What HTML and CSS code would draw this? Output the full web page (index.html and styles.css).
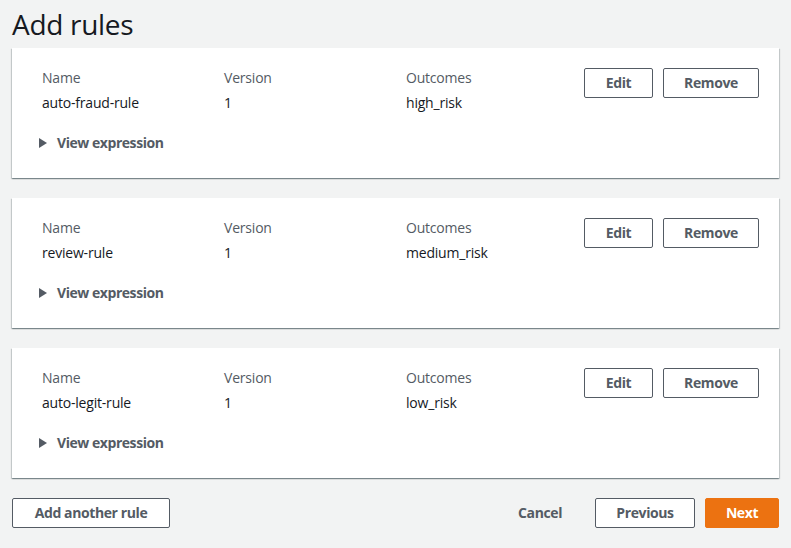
FILE: index.html
```html
<!DOCTYPE html>
<html>
<head>
<meta charset="utf-8">
<link rel="stylesheet" href="styles.css">
</head>
<body>
<div class="page">
  <h1 class="title">Add rules</h1>
  <div class="cards">
    <div class="card">
      <div class="grid">
        <div class="col"><div class="label">Name</div><div class="value">auto-fraud-rule</div></div>
        <div class="col"><div class="label">Version</div><div class="value">1</div></div>
        <div class="col"><div class="label">Outcomes</div><div class="value">high_risk</div></div>
        <div class="actions"><button class="btn btn-edit">Edit</button><button class="btn btn-remove">Remove</button></div>
      </div>
      <div class="expander"><span class="caret"></span>View expression</div>
    </div>
    <div class="card">
      <div class="grid">
        <div class="col"><div class="label">Name</div><div class="value">review-rule</div></div>
        <div class="col"><div class="label">Version</div><div class="value">1</div></div>
        <div class="col"><div class="label">Outcomes</div><div class="value">medium_risk</div></div>
        <div class="actions"><button class="btn btn-edit">Edit</button><button class="btn btn-remove">Remove</button></div>
      </div>
      <div class="expander"><span class="caret"></span>View expression</div>
    </div>
    <div class="card">
      <div class="grid">
        <div class="col"><div class="label">Name</div><div class="value">auto-legit-rule</div></div>
        <div class="col"><div class="label">Version</div><div class="value">1</div></div>
        <div class="col"><div class="label">Outcomes</div><div class="value">low_risk</div></div>
        <div class="actions"><button class="btn btn-edit">Edit</button><button class="btn btn-remove">Remove</button></div>
      </div>
      <div class="expander"><span class="caret"></span>View expression</div>
    </div>
  </div>
  <div class="footer">
    <button class="btn btn-add">Add another rule</button>
    <div class="footer-right">
      <button class="btn btn-link">Cancel</button>
      <button class="btn btn-prev">Previous</button>
      <button class="btn btn-primary">Next</button>
    </div>
  </div>
</div>
</body>
</html>
```

FILE: styles.css
```css
* { box-sizing: border-box; }
html, body { margin: 0; padding: 0; }
body {
  background: #f2f3f3;
  font-family: "Open Sans", "Liberation Sans", sans-serif;
  font-size: 14px;
  color: #16191f;
  width: 791px;
  height: 548px;
  overflow: hidden;
  letter-spacing: -0.2px;
}
.page { padding: 0 12px; }
.title {
  margin: 0;
  font-size: 28px;
  font-weight: 400;
  line-height: 48px;
  color: #16191f;
  letter-spacing: -0.3px;
}
.cards { display: flex; flex-direction: column; gap: 20px; }
.card {
  background: #fff;
  height: 130px;
  padding: 20px 20px 0 30px;
  box-shadow: 0 1px 1px 0 rgba(0,28,36,0.3), 1px 1px 1px 0 rgba(0,28,36,0.15), -1px 1px 1px 0 rgba(0,28,36,0.15);
}
.grid {
  display: grid;
  grid-template-columns: 182px 182px 1fr auto;
}
.label { color: #545b64; line-height: 22px; margin-top: -1px; }
.value { color: #16191f; line-height: 22px; margin-top: 3px; }
.actions { display: flex; gap: 10px; }
.btn {
  font-family: inherit;
  font-size: 14px;
  font-weight: 700;
  letter-spacing: -0.4px;
  color: #545b64;
  background: #fff;
  border: 1px solid #545b64;
  border-radius: 2px;
  height: 30px;
  padding: 0 20px;
  line-height: 28px;
  cursor: pointer;
}
.btn-edit { width: 69px; padding: 0; }
.btn-remove { width: 96px; padding: 0; }
.expander {
  display: flex;
  align-items: center;
  margin-top: 18px;
  margin-left: -3px;
  font-weight: 700;
  letter-spacing: -0.45px;
  color: #545b64;
  line-height: 22px;
}
.caret {
  width: 0; height: 0;
  border-top: 5px solid transparent;
  border-bottom: 5px solid transparent;
  border-left: 8px solid #545b64;
  margin-right: 10px;
}
.footer {
  display: flex;
  justify-content: space-between;
  align-items: center;
  margin-top: 20px;
}
.footer-right { display: flex; gap: 10px; align-items: center; }
.btn-add { width: 158px; padding: 0; }
.btn-link { border-color: transparent; background: transparent; padding: 0 20px; margin-right: 2px; }
.btn-prev { width: 100px; padding: 0; }
.btn-primary {
  background: #ec7211;
  border-color: #ec7211;
  color: #fff;
  width: 74px;
  padding: 0;
}
```
